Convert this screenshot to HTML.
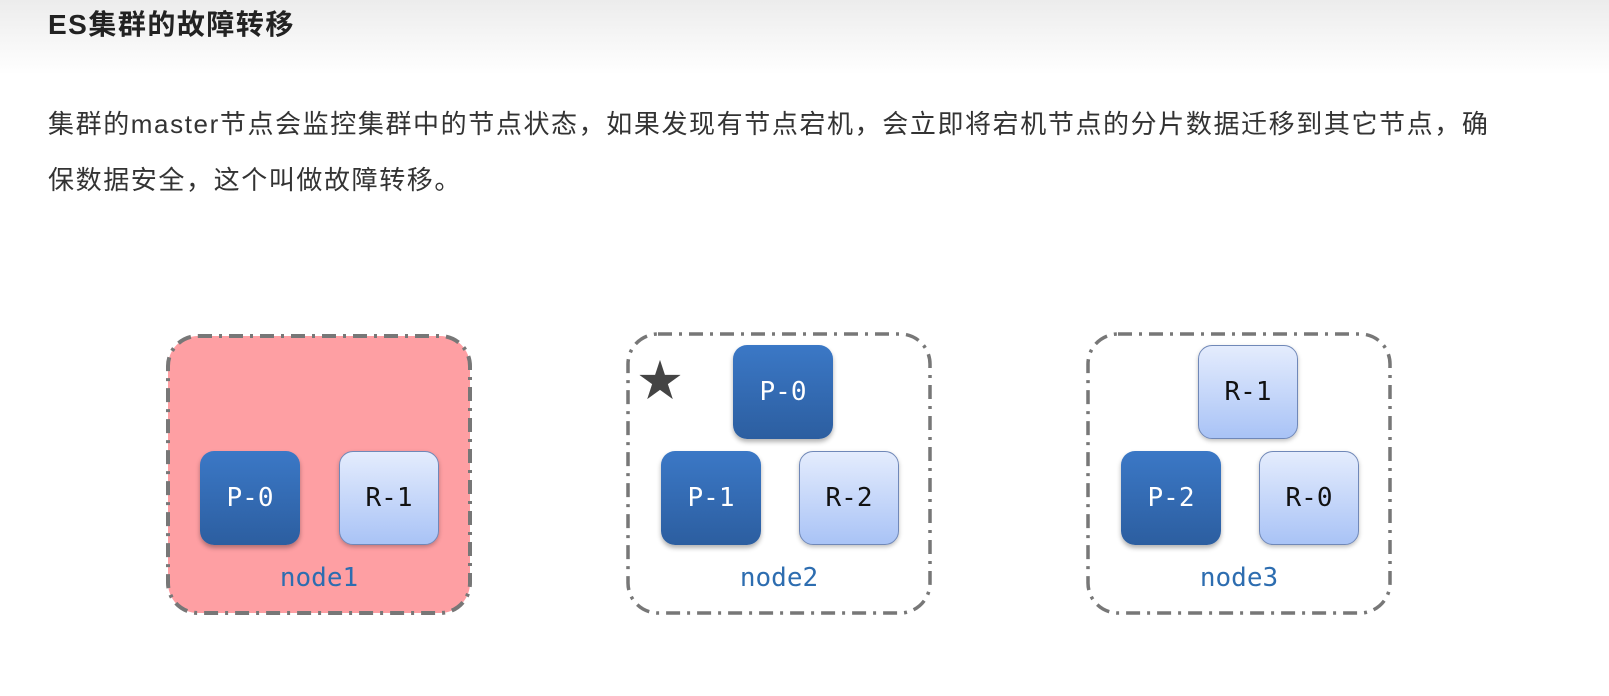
<!DOCTYPE html>
<html><head><meta charset="utf-8"><style>
*{margin:0;padding:0;box-sizing:border-box}
body{width:1609px;height:696px;background:#fff;position:relative;overflow:hidden;font-family:"Liberation Sans","Noto Sans CJK SC",sans-serif}
.hdr{position:absolute;left:0;top:0;width:1609px;height:75px;background:linear-gradient(#ececec,#fff)}
.title{position:absolute;left:48px;top:3px;font-size:28px;font-weight:bold;color:#222;letter-spacing:1.5px}
.p{position:absolute;left:48px;font-size:26px;color:#333;white-space:nowrap;letter-spacing:1.6px}
.node{position:absolute;width:306px;height:281px}
.node svg{position:absolute;left:0;top:0}
.b{position:absolute;width:100px;height:94px;border-radius:14px;font-family:"DejaVu Sans Mono","Liberation Mono",monospace;font-size:26px;display:flex;align-items:center;justify-content:center}
.P{background:linear-gradient(#3b78c6,#2c5ea0);color:#fff;box-shadow:0 3px 5px rgba(0,0,0,.3)}
.R{background:linear-gradient(#e4ecfd,#a9c3f6);color:#111;border:1px solid #7088b8;box-shadow:0 2px 4px rgba(0,0,0,.25)}
.lbl{position:absolute;width:306px;text-align:center;top:229px;font-family:"DejaVu Sans Mono","Liberation Mono",monospace;font-size:26px;color:#2d6db0}
</style></head><body>
<div class="hdr"></div>
<div class="title">ES集群的故障转移</div>
<div class="p" style="top:104px">集群的master节点会监控集群中的节点状态，如果发现有节点宕机，会立即将宕机节点的分片数据迁移到其它节点，确</div>
<div class="p" style="top:160px">保数据安全，这个叫做故障转移。</div>

<div class="node" style="left:166px;top:334px">
<svg width="306" height="281"><rect x="2" y="2" width="302" height="277" rx="30" fill="#fe9fa3" stroke="#777" stroke-width="4" stroke-dasharray="14 7 3 7"/></svg>
<div class="b P" style="left:34px;top:117px">P-0</div>
<div class="b R" style="left:173px;top:117px">R-1</div>
<div class="lbl">node1</div>
</div>

<div class="node" style="left:626px;top:332px">
<svg width="306" height="283"><rect x="2" y="2" width="302" height="279" rx="30" fill="none" stroke="#777" stroke-width="3.5" stroke-dasharray="14 7 3 7"/></svg>
<div style="position:absolute;left:12px;top:28px;font-size:44px;color:#444;line-height:1">★</div>
<div class="b P" style="left:107px;top:13px">P-0</div>
<div class="b P" style="left:35px;top:119px">P-1</div>
<div class="b R" style="left:173px;top:119px">R-2</div>
<div class="lbl" style="top:231px">node2</div>
</div>

<div class="node" style="left:1086px;top:332px">
<svg width="306" height="283"><rect x="2" y="2" width="302" height="279" rx="30" fill="none" stroke="#777" stroke-width="3.5" stroke-dasharray="14 7 3 7"/></svg>
<div class="b R" style="left:112px;top:13px">R-1</div>
<div class="b P" style="left:35px;top:119px">P-2</div>
<div class="b R" style="left:173px;top:119px">R-0</div>
<div class="lbl" style="top:231px">node3</div>
</div>
</body></html>
